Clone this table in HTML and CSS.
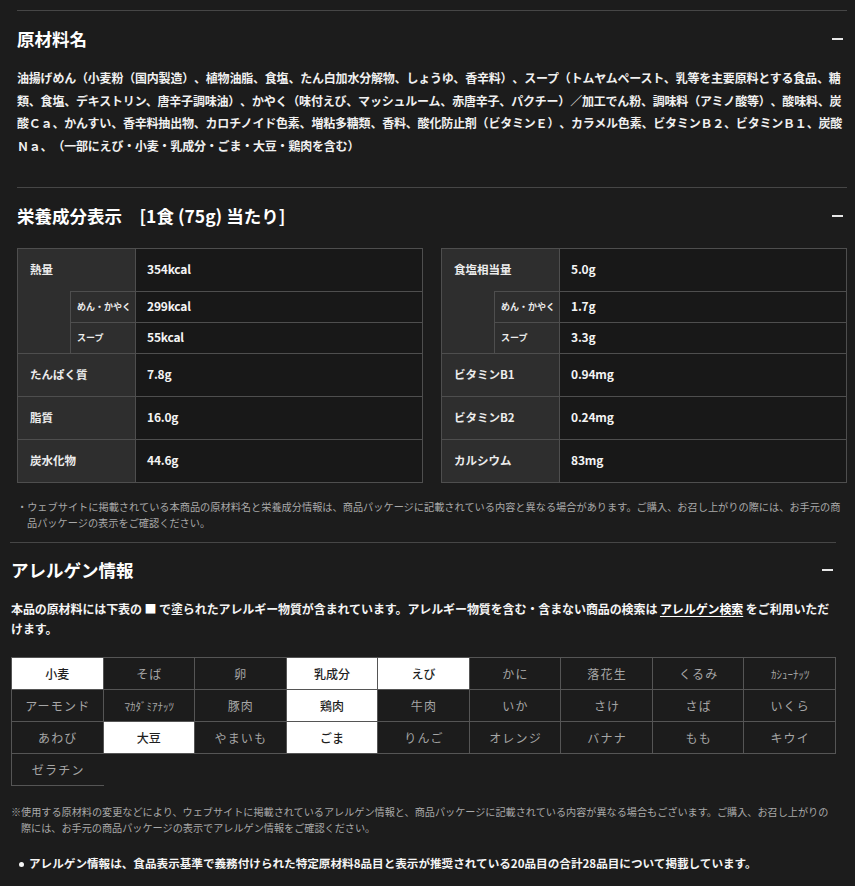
FILE: index.html
```html
<!DOCTYPE html>
<html lang="ja">
<head>
<meta charset="utf-8">
<title>原材料・栄養成分・アレルゲン情報</title>
<link rel="stylesheet" href="styles.css">
</head>
<body>
<div class="upper">
  <section class="block">
    <div class="block-head">
      <h2 class="block-title">原材料名</h2>
      <span class="toggle" aria-hidden="true"></span>
    </div>
    <p class="ingredients">油揚げめん（小麦粉（国内製造）、植物油脂、食塩、たん白加水分解物、しょうゆ、香辛料）、スープ（トムヤムペースト、乳等を主要原料とする食品、糖類、食塩、デキストリン、唐辛子調味油）、かやく（味付えび、マッシュルーム、赤唐辛子、パクチー）／加工でん粉、調味料（アミノ酸等）、酸味料、炭酸Ｃａ、かんすい、香辛料抽出物、カロチノイド色素、増粘多糖類、香料、酸化防止剤（ビタミンＥ）、カラメル色素、ビタミンＢ２、ビタミンＢ１、炭酸Ｎａ、（一部にえび・小麦・乳成分・ごま・大豆・鶏肉を含む）</p>
  </section>

  <section class="block">
    <div class="block-head">
      <h2 class="block-title">栄養成分表示　[1食 (75g) 当たり]</h2>
      <span class="toggle" aria-hidden="true"></span>
    </div>
    <div class="tables">
      <table class="ntable">
        <colgroup><col class="c1"><col class="c2"><col></colgroup>
        <tr class="rh"><th class="lab" colspan="2">熱量</th><td>354kcal</td></tr>
        <tr class="rs1"><th class="lab blank" rowspan="2"></th><th class="sub">めん・かやく</th><td>299kcal</td></tr>
        <tr class="rs2"><th class="sub">スープ</th><td>55kcal</td></tr>
        <tr class="rh"><th class="lab" colspan="2">たんぱく質</th><td>7.8g</td></tr>
        <tr class="rh"><th class="lab" colspan="2">脂質</th><td>16.0g</td></tr>
        <tr class="rh2"><th class="lab" colspan="2">炭水化物</th><td>44.6g</td></tr>
      </table>
      <table class="ntable">
        <colgroup><col class="c1"><col class="c2"><col></colgroup>
        <tr class="rh"><th class="lab" colspan="2">食塩相当量</th><td>5.0g</td></tr>
        <tr class="rs1"><th class="lab blank" rowspan="2"></th><th class="sub">めん・かやく</th><td>1.7g</td></tr>
        <tr class="rs2"><th class="sub">スープ</th><td>3.3g</td></tr>
        <tr class="rh"><th class="lab" colspan="2">ビタミンB1</th><td>0.94mg</td></tr>
        <tr class="rh"><th class="lab" colspan="2">ビタミンB2</th><td>0.24mg</td></tr>
        <tr class="rh2"><th class="lab" colspan="2">カルシウム</th><td>83mg</td></tr>
      </table>
    </div>
    <p class="note">・ウェブサイトに掲載されている本商品の原材料名と栄養成分情報は、商品パッケージに記載されている内容と異なる場合があります。ご購入、お召し上がりの際には、お手元の商品パッケージの表示をご確認ください。</p>
  </section>
</div>

<section class="allergen">
  <div class="block-head">
    <h2 class="block-title">アレルゲン情報</h2>
    <span class="toggle toggle-b" aria-hidden="true"></span>
  </div>
  <p class="allergen-lead">本品の原材料には下表の <span class="sq">■</span> で塗られたアレルギー物質が含まれています。アレルギー物質を含む・含まない商品の検索は <a class="link" href="#">アレルゲン検索</a> をご利用いただけます。</p>
  <div class="agrid">
    <div class="cell on">小麦</div>
    <div class="cell">そば</div>
    <div class="cell">卵</div>
    <div class="cell on">乳成分</div>
    <div class="cell on">えび</div>
    <div class="cell">かに</div>
    <div class="cell">落花生</div>
    <div class="cell">くるみ</div>
    <div class="cell narrow">ｶｼｭｰﾅｯﾂ</div>
    <div class="cell">アーモンド</div>
    <div class="cell narrow">ﾏｶﾀﾞﾐｱﾅｯﾂ</div>
    <div class="cell">豚肉</div>
    <div class="cell on">鶏肉</div>
    <div class="cell">牛肉</div>
    <div class="cell">いか</div>
    <div class="cell">さけ</div>
    <div class="cell">さば</div>
    <div class="cell">いくら</div>
    <div class="cell">あわび</div>
    <div class="cell on">大豆</div>
    <div class="cell">やまいも</div>
    <div class="cell on">ごま</div>
    <div class="cell">りんご</div>
    <div class="cell">オレンジ</div>
    <div class="cell">バナナ</div>
    <div class="cell">もも</div>
    <div class="cell">キウイ</div>
    <div class="cell last">ゼラチン</div>
  </div>
  <p class="anote">※使用する原材料の変更などにより、ウェブサイトに掲載されているアレルゲン情報と、商品パッケージに記載されている内容が異なる場合もございます。ご購入、お召し上がりの際には、お手元の商品パッケージの表示でアレルゲン情報をご確認ください。</p>
  <ul class="blist">
    <li>アレルゲン情報は、食品表示基準で義務付けられた特定原材料8品目と表示が推奨されている20品目の合計28品目について掲載しています。</li>
  </ul>
</section>
</body>
</html>
```

FILE: styles.css
```css
* { box-sizing: border-box; }

html, body {
  margin: 0;
  padding: 0;
  background: #1c1c1c;
  color: #f2f2f2;
  font-family: "Noto Sans CJK JP", "Noto Sans", sans-serif;
  text-spacing-trim: space-all;
}

.upper {
  margin: 10px 8px 0 17px;
}

.block {
  border-top: 1px solid #464646;
}

.block-head {
  display: flex;
  align-items: center;
  justify-content: space-between;
  padding-top: 16px;
}

.block-title {
  margin: 0;
  font-size: 17.5px;
  line-height: 24px;
  font-weight: 700;
  color: #fff;
}

.toggle {
  display: block;
  width: 11px;
  height: 2px;
  background: #e6e6e6;
  margin-right: 4px;
}

.toggle-b {
  margin-right: 3px;
}

.ingredients {
  margin: 16px 0 30px;
  font-size: 12px;
  letter-spacing: -0.2px;
  line-height: 22.5px;
  font-weight: 700;
  color: #f0f0f0;
}

.tables {
  display: grid;
  grid-template-columns: 1fr 1fr;
  column-gap: 18px;
  margin-top: 20px;
}

.ntable {
  width: 100%;
  border-collapse: separate;
  border-spacing: 0;
  border-right: 1px solid #4e4e4e;
  border-bottom: 1px solid #4e4e4e;
  table-layout: fixed;
}

.ntable col.c1 { width: 53px; }
.ntable col.c2 { width: 65px; }

.ntable th,
.ntable td {
  border-top: 1px solid #4e4e4e;
  border-left: 1px solid #4e4e4e;
  padding: 0;
  text-align: left;
  font-weight: 700;
  white-space: nowrap;
  line-height: 16px;
}

.ntable tr.rh { height: 43px; }
.ntable tr.rh2 { height: 43px; }
.ntable tr.rs1 { height: 31px; }
.ntable tr.rs2 { height: 31px; }

.ntable th.lab {
  background: #2e2e2e;
  font-size: 11.5px;
  color: #ececec;
  padding-left: 12px;
  padding-bottom: 2px;
}

.ntable th.blank {
  border-top: 0;
}

.ntable th.sub {
  background: #2e2e2e;
  font-size: 9px;
  color: #ececec;
  padding-left: 6px;
}

.ntable td {
  background: #181818;
  font-size: 12px;
  color: #f4f4f4;
  padding-left: 11px;
  padding-bottom: 2px;
  letter-spacing: -0.2px;
}

.note {
  margin: 16px 0 0;
  padding-left: 10px;
  text-indent: -10px;
  font-size: 10.2px;
  line-height: 16px;
  color: #a9a9a9;
}

.allergen {
  margin: 11px 19px 0 10px;
  border-top: 1px solid #464646;
}

.allergen .block-head {
  padding-top: 15px;
  padding-left: 1px;
}

.allergen-lead {
  margin: 17px 0 0 1px;
  font-size: 12px;
  letter-spacing: -0.1px;
  line-height: 20px;
  font-weight: 700;
  color: #f4f4f4;
}

.sq { color: #fff; }

.link {
  color: #fff;
  text-decoration: underline;
  text-underline-offset: 2px;
}

.agrid {
  display: grid;
  grid-template-columns: repeat(9, 1fr);
  margin: 18px 0 0 1px;
  border-top: 1px solid #555;
  border-left: 1px solid #555;
}

.cell {
  height: 32px;
  display: flex;
  align-items: center;
  justify-content: center;
  border-right: 1px solid #555;
  border-bottom: 1px solid #555;
  font-size: 12px;
  color: #a6a6a6;
  letter-spacing: 1.2px;
  padding-left: 1px;
  background: #1c1c1c;
}

.cell.on {
  background: #fff;
  color: #1e1e1e;
  letter-spacing: 0;
  padding-left: 0;
  font-weight: 500;
}

.cell.narrow {
  font-size: 11px;
  letter-spacing: 0;
}

.cell.last {
  border-right: 0;
}

.anote {
  margin: 18px 0 0 1px;
  padding-left: 10px;
  text-indent: -10px;
  font-size: 10.15px;
  line-height: 16px;
  color: #a9a9a9;
}

.blist {
  list-style: none;
  margin: 17px 0 0;
  padding-left: 19px;
  font-size: 11.6px;
  line-height: 20px;
  font-weight: 700;
  color: #f4f4f4;
}

.blist li::before {
  content: "";
  display: inline-block;
  width: 5px;
  height: 5px;
  border-radius: 50%;
  background: #f4f4f4;
  margin: 0 5px 0 -10px;
  vertical-align: middle;
}
```
